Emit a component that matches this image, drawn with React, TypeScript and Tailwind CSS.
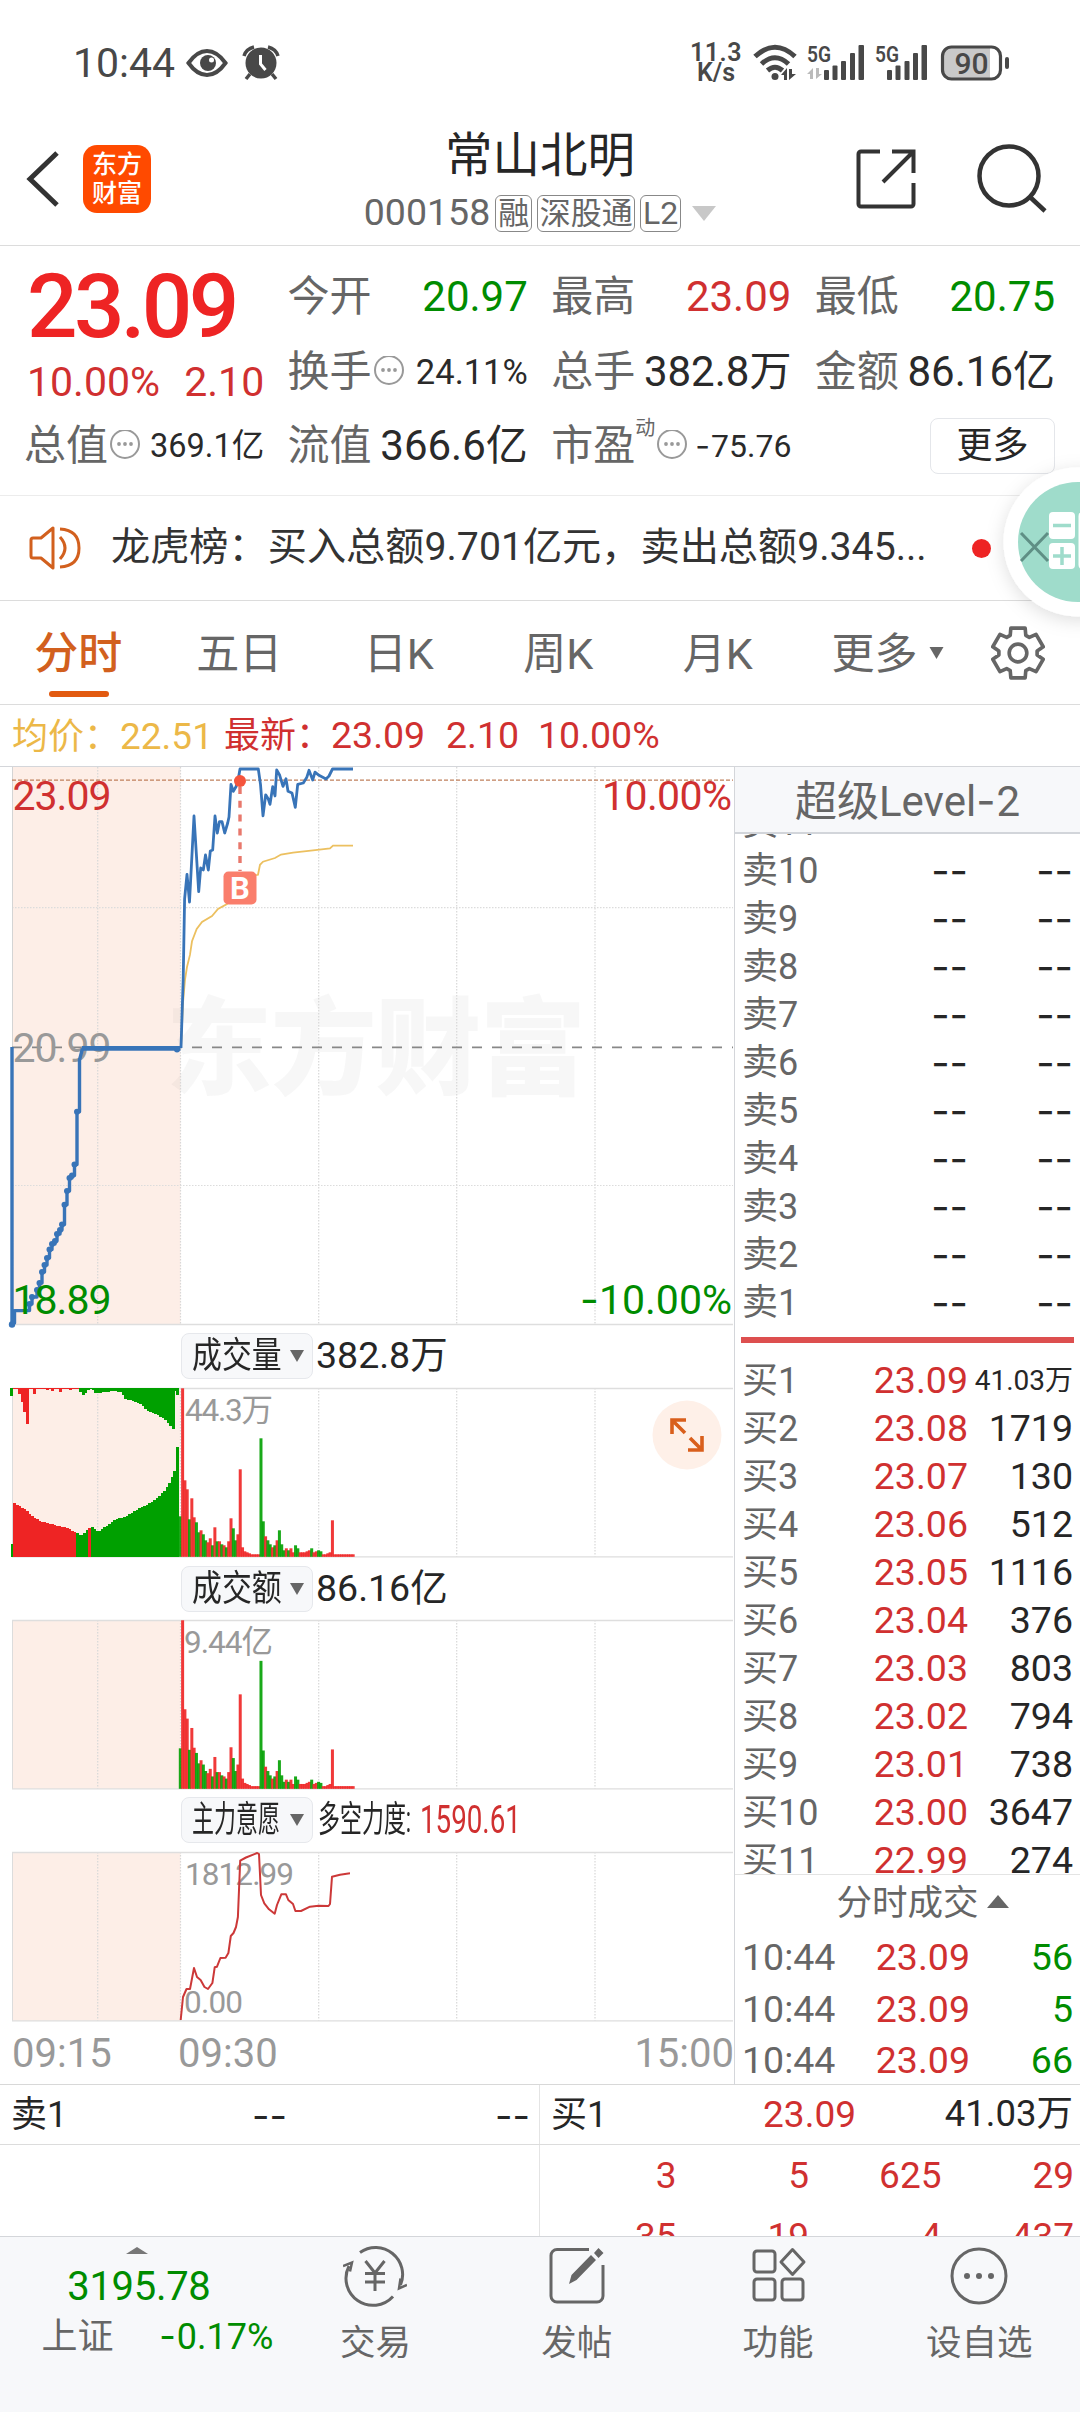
import type { ReactNode } from "react";
import clsx from "clsx";

const RED = "#d03030";
const GREEN = "#008c00";
const UP = "#ee2424";
const DOWN = "#00a000";

const TABS = ["分时", "五日", "日K", "周K", "月K"];

const ASKS = [10, 9, 8, 7, 6, 5, 4, 3, 2, 1];

const BIDS = [
  ["23.09", "41.03万"],
  ["23.08", "1719"],
  ["23.07", "130"],
  ["23.06", "512"],
  ["23.05", "1116"],
  ["23.04", "376"],
  ["23.03", "803"],
  ["23.02", "794"],
  ["23.01", "738"],
  ["23.00", "3647"],
  ["22.99", "274"],
];

const TRADES = ["56", "5", "66"];

const QUEUE = [
  ["3", "5", "625", "29"],
  ["35", "19", "4", "437"],
];

// One bar per minute since the open, height in px; negative = falling minute.
const MINUTES = [
  -40, 168, 76, 67, -37, 58, 39, -34, -24, 26, -22, -16, 14, 18, -11, 29, -15, 15, -12, 11, -9, 15,
  38, -28, -16, 22, 87, 9, 5, 4, 3, 2, 2, 2, 2, -118, -35, 20, -16, -12, 9, -11, 16, -26, -12, -6,
  8, -6, 8, 4, -11, -8, 4, 4, 4, 5, 6, -8, 4, 5, -6, -5, 2, 2, 3, 4, 36, 2, 2, 2, 2, 2, 2, 2, 2, 2,
];

// Call auction envelope, [x, height].
const AUCTION_MATCHED = [
  [12, 54], [18, 51], [25, 46], [31, 40], [38, 36], [52, 32], [65, 29], [75, 24], [79, 21], [84, 25],
  [87, 29], [91, 30], [94, 26], [98, 26], [104, 30], [112, 36], [125, 41], [135, 47], [147, 53],
  [155, 58], [162, 65], [166, 70], [170, 78], [174, 89], [176, 96],
];

const AUCTION_GREEN_LEFT = [
  [78, 2], [80, 5], [82, 8], [84, 5], [87, 1], [92, 2], [94, 5], [105, 4], [112, 3], [120, 4],
  [124, 11], [128, 12], [135, 14], [140, 17], [148, 24], [155, 26], [163, 31], [168, 37], [173, 42],
];

const AUCTION_RED_LEFT = [
  [14, 1], [19, 6], [21.5, 14], [24, 24], [26.5, 36], [34, 6], [42, 1], [47, 2], [52, 3],
  [56, 1], [60, 4], [66, 1], [70, 2], [75, 1],
];

const AUCTION_STEPS = [
  [29.5, 537], [32, 530], [37, 523], [39.5, 516], [42, 505], [44.5, 498], [47, 491], [49.5, 482.5],
  [52, 477], [55, 474], [57, 467], [60, 463], [62, 457.5], [64.5, 437.7], [67, 424], [69.5, 411],
  [72, 408.6], [74.5, 397.5], [77, 344.7],
];

const PRICE_LINE =
  "181,281 183.2,212 184.6,132 187,107.4 189.5,135 194,49 198.7,124.6 200.7,101 203.3,103 205.5,88 208.3,103 210.3,84 212.7,83 215,49 217.3,66 219.5,54.6 222,54.6 224.7,66 227.7,56 229,50 231,17.4 233.3,24.3 236,19.7 238,13.6 240,2 258.3,2 260.5,17.4 263,48.8 265.7,27.8 268.3,32 270,37.3 272.7,19.7 275,29 276.7,2.9 279.7,8.3 283,19.4 286,11.7 288,24.3 292,26 295.3,40.4 297.7,17.4 303.3,16 306.7,10.6 309,3.3 312.7,13 315,5.2 319,8.3 326,12 329,9 332.5,2 353,2";

const AVERAGE_LINE =
  "181,281 183,235.6 185,212.6 187,200 190,187.7 192,174.3 196.7,162 202,155 212,149 218,142 227,137 235,125.4 242,110 258,107.8 260,97.8 263,94.7 275,91 281,87.5 293,85.6 313,83.3 330,81.4 333,78.7 353,78.7";

const FORCE_LINE =
  "180.7,168 183,145 186.5,137 190,137 194,116 197,125 200.6,128 204.5,135 208,137 212.4,131 214.7,115.3 217,114.7 220.4,106 225.6,105.7 228.4,101 230.8,84 233.5,81 236,75 237.9,65 240.2,8.7 246,5.5 257.2,1 259,2 261,43 264.3,51.3 269,57.3 274.7,61.7 277,53 281.3,42.3 286,42.3 288.3,48 293,52 295.4,59 301,59 310,54.7 318.5,53.7 328.5,54 330,52 332,24.7 340,22.7 350,21.3";

const GRID_X = [97.7, 180.5, 318.7, 456.7, 595];

function heightAt(points: number[][], x: number) {
  for (let i = 1; i < points.length; i++) {
    const [x0, h0] = points[i - 1];
    const [x1, h1] = points[i];
    if (x <= x1) return h0 + ((h1 - h0) * (x - x0)) / (x1 - x0);
  }
  return points[points.length - 1][1];
}

function range(from: number, to: number, step: number) {
  const out: number[] = [];
  for (let v = from; v < to; v += step) out.push(v);
  return out;
}

// Roboto's hyphen is too short for a sign, Inter's has the right length.
function Minus() {
  return <span className="mr-px font-[Inter]">-</span>;
}

function Frame({ height }: { height: number }) {
  return (
    <>
      <rect x="12" y="0" width="168.5" height={height} fill="#fdeee7" />
      {GRID_X.map((x) => (
        <line key={x} x1={x} x2={x} y1="0" y2={height} stroke="#d8d8d8" strokeWidth="1.2" strokeDasharray="1.5 1.5" />
      ))}
      <path d={`M12.5 0V${height}`} stroke="#dcdcdc" />
      <path d={`M12 .5H733M12 ${height}H733`} stroke="#dedede" strokeWidth="1.3" />
    </>
  );
}

function MinuteBars({ gain = false }: { gain?: boolean }) {
  return (
    <>
      {MINUTES.map((value, i) => {
        const scale = !gain || i < 2 ? 1 : i < 9 ? 1.04 : 1.08;
        const h = Math.abs(value) * scale + 0.5;
        return (
          <rect
            key={i}
            x={178.8 + i * 2.305}
            y={168.8 - h}
            width="3"
            height={h}
            fill={value < 0 ? DOWN : UP}
            fillOpacity="0.9"
          />
        );
      })}
    </>
  );
}

function PriceChart() {
  const steps = AUCTION_STEPS.map(([x, y]) => `H${x}V${y}`).join("");
  return (
    <svg viewBox="0 0 734 560" className="block h-[560px] w-[734px] overflow-visible">
      <rect x="12" y="0" width="168.5" height="558" fill="#fdeee7" />
      <text x="166" y="319" fontSize="106" fontWeight="900" textLength="420" fill="#777" fillOpacity="0.06">
        东方财富
      </text>
      {GRID_X.map((x) => (
        <line key={x} x1={x} x2={x} y1="0" y2="558" stroke="#d8d8d8" strokeWidth="1.2" strokeDasharray="1.5 1.5" />
      ))}
      <path d="M12 140.7H733M12 418.5H733" stroke="#dcdcdc" strokeWidth="1.2" strokeDasharray="1.5 1.5" />
      <path d="M12.5 0V558" stroke="#d4d4d4" />
      <path d="M12 557.5H733" stroke="#dedede" strokeWidth="1.5" />
      <path d="M12 13.2H733" stroke="#c0805c" strokeWidth="1.3" strokeDasharray="4 2" />
      <path d="M12 280.4H733" stroke="#888" strokeWidth="1.8" strokeDasharray="10 10" />

      <g fontSize="41">
        <text x="12.500" y="43" fill={RED} textLength="99">23.09</text>
        <text x="12.500" y="295" fill="#999" textLength="99">20.99</text>
        <text x="602" y="43" fill={RED} textLength="130">10.00%</text>
        <text x="580" y="546.5" fill={GREEN} textLength="152">
          <tspan fontFamily="Inter">-</tspan>10.00%
        </text>
      </g>

      <polyline points={AVERAGE_LINE} fill="none" stroke="#ecc060" strokeWidth="1.8" />
      <g fill="none" stroke="#3874b8" strokeLinejoin="round">
        <path d={`M12 280V557L14.5 556V543.6H28${steps}H79.5V293L82.5 281.5`} strokeWidth="3.4" />
        <path d="M82 281.4H180.5" strokeWidth="4.6" />
        <polyline points={PRICE_LINE} strokeWidth="2.8" />
      </g>
      <g fill="#3874b8">
        <circle cx="12" cy="557.5" r="3.2" />
        <circle cx="177" cy="282.5" r="3" />
        {AUCTION_STEPS.map(([x, y]) => (
          <circle key={x} cx={x} cy={y} r="3" />
        ))}
      </g>
      <text x="12.500" y="546.5" fontSize="41" fill={GREEN} textLength="99">18.89</text>

      {/* buy marker */}
      <path d="M240 20V104" stroke="#e8786c" strokeWidth="3.4" strokeDasharray="7 6.8" />
      <circle cx="240" cy="14" r="6" fill="#f5543c" />
      <rect x="223.5" y="104.5" width="33" height="33" rx="5" fill="#fa7e6c" />
      <text x="240" y="132" fontSize="31" fontWeight="700" textAnchor="middle" fill="#fff">
        B
      </text>
    </svg>
  );
}

function VolumeChart() {
  return (
    <svg viewBox="0 0 734 170" className="block h-[170px] w-[734px] overflow-visible">
      <Frame height={168.8} />
      <g shapeRendering="crispEdges">
        {range(13, 176, 2.5).map((x) => {
          const h = heightAt(AUCTION_MATCHED, x);
          const red = x < 75 || (x > 87.5 && x < 90.5);
          return <rect key={x} x={x} y={168.8 - h} width="3" height={h} fill={red ? UP : DOWN} />;
        })}
        <rect x="176" y="59" width="3" height="110" fill={DOWN} />
        <rect x="10.500" y="156" width="2.700" height="13" fill={DOWN} />
        {range(79, 173, 2.5).map((x) => (
          <rect key={x} x={x} y="0" width="3" height={heightAt(AUCTION_GREEN_LEFT, x)} fill={DOWN} />
        ))}
        <rect x="174" y="0" width="3" height="3" fill={DOWN} />
        <rect x="176" y="0" width="3" height="7" fill={DOWN} />
        <rect x="13" y="0" width="66" height="1.4" fill={UP} />
        {AUCTION_RED_LEFT.map(([x, h]) => (
          <rect key={x} x={x - 1} y="0" width="3" height={h} fill={UP} />
        ))}
        <rect x="10" y="0" width="3" height="8" fill={DOWN} />
      </g>
      <MinuteBars />
      <text x="185" y="32.5" fontSize="31.5" fill="#999" textLength="88">44.3万</text>
    </svg>
  );
}

function TurnoverChart() {
  return (
    <svg viewBox="0 0 734 170" className="block h-[170px] w-[734px] overflow-visible">
      <Frame height={168.8} />
      <MinuteBars gain />
      <text x="184" y="32.5" fontSize="31.5" fill="#999" textLength="89">9.44亿</text>
    </svg>
  );
}

function ForceChart() {
  return (
    <svg viewBox="0 0 734 170" className="block h-[170px] w-[734px] overflow-visible">
      <Frame height={168.8} />
      <g fontSize="31.5" fill="#999">
        <text x="185" y="33" textLength="109">1812.99</text>
        <text x="184" y="161" textLength="59">0.00</text>
      </g>
      <polyline points={FORCE_LINE} fill="none" stroke="#cc3838" strokeWidth="2" strokeLinejoin="round" />
    </svg>
  );
}

function IndicatorBar({ name, squeeze, children }: { name: string; squeeze: string; children: ReactNode }) {
  return (
    <div className="flex h-[46px] items-center pl-[181px] text-[#262626]">
      <div className="flex h-[46px] w-[132px] shrink-0 items-center rounded-lg border border-[#e6e8ec] bg-[#f7f8fa] pl-[10px]">
        <div className="w-[90px]">
          <span className={clsx("block w-max origin-left text-[36px] leading-none", squeeze)}>{name}</span>
        </div>
        <svg viewBox="0 0 14 12" className="ml-[8px] h-3 w-[14px] fill-[#666]">
          <path d="M0 0h14L7 12z" />
        </svg>
      </div>
      {children}
    </div>
  );
}

function InfoDots() {
  return (
    <svg viewBox="0 0 32 32" className="ml-px size-8 shrink-0">
      <circle cx="16" cy="14" r="14" fill="none" stroke="#999" strokeWidth="2" />
      <g fill="#999">
        <circle cx="10" cy="14" r="1.900" />
        <circle cx="16" cy="14" r="1.900" />
        <circle cx="22" cy="14" r="1.900" />
      </g>
    </svg>
  );
}

function Stat({ label, value, tone, small, info, sup }: {
  label: string;
  value: ReactNode;
  tone?: string;
  small?: string;
  info?: boolean;
  sup?: string;
}) {
  return (
    <div className="flex h-[74.5px] items-center leading-none whitespace-nowrap">
      <span className="-ml-[3px] text-[42px] text-[#666]">{label}</span>
      {sup && <span className="-mt-9 text-[20px] text-[#666]">{sup}</span>}
      {info && <InfoDots />}
      <span className={clsx("ml-auto", small ?? "text-[42px]", tone ?? "text-[#2a2a2a]")}>{value}</span>
    </div>
  );
}

function StatusBar() {
  return (
    <div className="flex h-28 items-center pt-[14px] text-[#484848]">
      <span className="ml-[73px] w-[112px] text-[41px] leading-none">10:44</span>
      <svg viewBox="0 0 44 30" className="h-[30px] w-11">
        <path d="M3.5 15Q12 3 22 3t18.500 12Q32 27 22 27T3.500 15z" fill="none" stroke="#484848" strokeWidth="4" />
        <circle cx="23" cy="15" r="8" fill="#484848" />
        <circle cx="26.500" cy="12" r="2.500" fill="#fff" />
      </svg>
      <svg viewBox="0 0 38 36" className="ml-[13px] h-9 w-[38px]" fill="none" stroke="#484848">
        <circle cx="19" cy="18" r="15.500" fill="#484848" stroke="none" />
        <path d="M2 11Q4 4 12 2M36 11Q34 4 26 2M8 29l-4 5M30 29l4 5" strokeWidth="3.500" />
        <path d="M18.500 10v9l5 6" stroke="#fff" strokeWidth="3" />
      </svg>
      <div className="ml-auto flex w-[56px] flex-col items-center text-[25px] leading-[20px] font-semibold">
        <span className="tracking-[0.500px]">11.3</span>
        <span>K/s</span>
      </div>
      <svg viewBox="0 0 48 38" className="ml-[7px] h-[38px] w-12" fill="none" stroke="#484848">
        <path d="M4 12.500Q24-6 44 12.500" strokeWidth="5" />
        <path d="M10.500 20Q24 7.500 37.500 20" strokeWidth="5" />
        <path d="M16.500 26.500Q24 20 31.500 26.500" strokeWidth="5" />
        <g fill="#484848" stroke="none">
          <circle cx="24" cy="32.500" r="3.500" />
          <path d="M30 31l6-7v12h-3v-5zM45 30l-7 6V25h3v5z" />
        </g>
      </svg>
      <svg viewBox="0 0 62 38" className="ml-[8px] h-[38px] w-[62px] overflow-visible" fill="#484848">
        <text x="0" y="17.500" fontSize="22" fontWeight="600" textLength="24" lengthAdjust="spacingAndGlyphs">5G</text>
        <path d="M0 30l6-6v11H3v-5zM15 30l-6 5V24h3v6z" fill="#bbb" />
        <rect x="17" y="26" width="5" height="10" rx="1" />
        <rect x="25.500" y="21.500" width="5" height="14.500" rx="1" />
        <rect x="34" y="17" width="5" height="19" rx="1" />
        <rect x="43" y="9" width="5" height="27" rx="1" />
        <rect x="51.500" y="1" width="5.500" height="35" rx="1" />
      </svg>
      <svg viewBox="0 0 62 38" className="ml-[6px] h-[38px] w-[62px] overflow-visible" fill="#484848">
        <text x="0" y="17.500" fontSize="22" fontWeight="600" textLength="24" lengthAdjust="spacingAndGlyphs">5G</text>
        <rect x="12" y="26" width="5" height="10" rx="1" />
        <rect x="20.500" y="21.500" width="5" height="14.500" rx="1" />
        <rect x="29.500" y="17" width="5" height="19" rx="1" />
        <rect x="38" y="9" width="5" height="27" rx="1" />
        <rect x="46.500" y="1" width="5.500" height="35" rx="1" />
      </svg>
      <svg viewBox="0 0 72 38" className="mr-[69px] ml-[2px] h-[38px] w-[72px]">
        <path d="M12 4h39v30H12a8 8 0 0 1-8-8V12a8 8 0 0 1 8-8z" fill="#c9c9c9" />
        <rect x="3.500" y="3" width="58" height="32" rx="9" fill="none" stroke="#484848" strokeWidth="3.200" />
        <rect x="66" y="13" width="4" height="12" rx="2" fill="#484848" />
        <text x="32.500" y="29.500" fontSize="30" fontWeight="500" textAnchor="middle" fill="#484848">90</text>
      </svg>
    </div>
  );
}

function Header() {
  return (
    <div className="flex h-[134px] items-center border-b border-[#dcdcdc]">
      <div className="flex w-[260px] items-center">
        <svg viewBox="0 0 34 56" className="ml-[26px] h-14 w-[34px]">
          <path d="M31 2L4 28l27 26" fill="none" stroke="#333" strokeWidth="5" />
        </svg>
        <div className="ml-[23px] flex size-[68px] flex-col items-center justify-center rounded-[14px] bg-[#ff4a00] text-[25px] leading-[29px] font-medium text-white">
          <span>东方</span>
          <span>财富</span>
        </div>
      </div>
      <div className="flex flex-1 flex-col items-center pt-[11px]">
        <h1 className="text-[47.500px] leading-[58px] text-[#262626]">常山北明</h1>
        <div className="flex h-[56px] items-center text-[#666]">
          <span className="mr-[5px] text-[37.500px] leading-none">000158</span>
          <span className="mr-[5px] flex h-[37px] w-[37px] items-center justify-center rounded-md border border-[#888] text-[31px] leading-none">融</span>
          <span className="mr-[5px] flex h-[37px] w-[98px] items-center justify-center rounded-md border border-[#888] text-[31px] leading-none">深股通</span>
          <span className="mr-[11px] flex h-[37px] w-[41px] items-center justify-center rounded-md border border-[#888] text-[32px] leading-none">L2</span>
          <svg viewBox="0 0 24 15" className="h-[15px] w-6 fill-[#c8c8c8]">
            <path d="M0 0h24L12 15z" />
          </svg>
        </div>
      </div>
      <div className="flex w-[260px] items-center pl-[36px]">
        <svg viewBox="0 0 60 60" className="size-[60px]" fill="none" stroke="#333" strokeWidth="4">
          <path d="M24 2.500H5a2.500 2.500 0 0 0-2.500 2.500v50A2.500 2.500 0 0 0 5 57.500h50a2.500 2.500 0 0 0 2.500-2.500V34M36 2.500h21.500V24M57 3L27 33" />
        </svg>
        <svg viewBox="0 0 70 70" className="ml-[61px] size-[70px]" fill="none" stroke="#333" strokeWidth="4.500">
          <circle cx="32" cy="32" r="29.500" />
          <path d="M53 53l15 14" />
        </svg>
      </div>
    </div>
  );
}

function Quote() {
  return (
    <div className="grid h-[250px] grid-cols-4 content-start gap-x-[26.4px] border-b border-[#ececec] pt-[14px] pr-[25px] pl-[27px]">
      <div className="row-span-2 h-[149px] leading-none">
        <div className="flex h-[92px] items-center text-[89px] font-medium tracking-[-3.700px] text-[#ee2424]">23.09</div>
        <div className="flex h-[57px] items-center justify-between pt-1 text-[41px] text-[#d03030]">
          <span>10.00%</span>
          <span>2.10</span>
        </div>
      </div>
      <Stat label="今开" value="20.97" tone="text-[#008c00]" />
      <Stat label="最高" value="23.09" tone="text-[#d03030]" />
      <Stat label="最低" value="20.75" tone="text-[#008c00]" />
      <Stat label="换手" value="24.11%" small="text-[34.500px]" info />
      <Stat label="总手" value="382.8万" />
      <Stat label="金额" value="86.16亿" />
      <Stat label="总值" value="369.1亿" small="text-[32.500px]" info />
      <Stat label="流值" value="366.6亿" />
      <Stat
        label="市盈"
        value={
          <>
            <Minus />
            75.76
          </>
        }
        small="text-[32px]"
        info
        sup="动"
      />
      <div className="flex h-[74.500px] items-center justify-end">
        <button className="h-[56px] w-[125px] rounded-lg border border-[#e4e6ea] text-[36px] leading-none text-[#262626]">
          更多
        </button>
      </div>
    </div>
  );
}

function News() {
  return (
    <div className="relative flex h-[105px] items-center border-b border-[#dcdcdc]">
      <svg viewBox="0 0 52 44" className="ml-[29px] h-11 w-[52px]" fill="none" stroke="#d2601e" strokeWidth="3">
        <path d="M24 2v40L12 32H4a2 2 0 0 1-2-2V14a2 2 0 0 1 2-2h8z" strokeLinejoin="round" />
        <path d="M31 11q10 11 0 22M31 3q19 1 19 19T31 41" />
      </svg>
      <p className="ml-[30px] w-[830px] text-[39.200px] leading-none whitespace-nowrap text-[#333]">
        龙虎榜：买入总额9.701亿元，卖出总额9.345...
      </p>
      <span className="ml-[31px] size-[19px] rounded-full bg-[#ee2424]" />

      {/* floating calculator, half off screen */}
      <svg viewBox="970 437 110 210" className="absolute top-[-59px] right-0 h-[210px] w-[110px]">
        <defs>
          <filter id="lift" x="-30%" y="-30%" width="160%" height="160%">
            <feDropShadow dx="0" dy="4" stdDeviation="9" floodColor="#000" floodOpacity="0.13" />
          </filter>
        </defs>
        <circle cx="1078" cy="542" r="74.500" fill="#fff" filter="url(#lift)" />
        <circle cx="1078" cy="542" r="60" fill="#9fdccb" />
        <path d="M1021 533l27 28M1048 533l-27 28" stroke="#5f8f85" strokeWidth="3" />
        <g fill="#fff">
          <rect x="1049" y="512" width="26" height="27" rx="4" />
          <rect x="1049" y="543" width="26" height="26" rx="4" />
          <rect x="1078.500" y="512" width="26" height="57" rx="4" />
        </g>
        <path d="M1053 525.500h18M1053 556h18M1062 547v18" stroke="#9fdccb" strokeWidth="3.500" />
      </svg>
    </div>
  );
}

function Gear() {
  const points = range(0, 6, 1).flatMap((k) =>
    [[-24, 18.5], [-16, 25], [16, 25], [24, 18.5]].map(([offset, r]) => {
      const a = ((k * 60 - 90 + offset) * Math.PI) / 180;
      return `${(26 + r * Math.cos(a)).toFixed(1)},${(26 + r * Math.sin(a)).toFixed(1)}`;
    }),
  );
  return (
    <svg viewBox="0 0 52 52" className="size-[54px]" fill="none" stroke="#666" strokeWidth="3.5" strokeLinejoin="round">
      <polygon points={points.join(" ")} />
      <circle cx="26" cy="26" r="8.500" />
    </svg>
  );
}

function Tabs() {
  return (
    <div className="flex h-[104px] items-center border-b border-[#dcdcdc] text-[43px] leading-none text-[#666]">
      {TABS.map((tab, i) => (
        <div
          key={tab}
          className={clsx(
            "relative flex h-full w-[159.500px] items-center justify-center pt-[3px]",
            i === 0 && "pr-[3px] text-[44px] font-medium text-[#d2601e]",
          )}
        >
          {tab}
          {i === 0 && <span className="absolute bottom-[7px] left-[49px] h-[6px] w-[60px] rounded-full bg-[#e25a10]" />}
        </div>
      ))}
      <span className="ml-[34px] pt-[3px]">更多</span>
      <svg viewBox="0 0 14 12" className="ml-[11px] h-3 w-[15px] fill-[#666]">
        <path d="M0 0h14L7 12z" />
      </svg>
      <div className="ml-[47px]">
        <Gear />
      </div>
    </div>
  );
}

function DepthRow({ label, price, volume, compact }: {
  label: string;
  price: string;
  volume: string;
  compact?: boolean;
}) {
  const empty = price === "--";
  return (
    <div className="flex h-12 shrink-0 items-center pt-px pr-[7px] pl-[7px] text-[37.500px] leading-none text-[#262626]">
      <span className="w-[100px] text-[36px] text-[#666]">{label}</span>
      <span className={clsx("w-[126px] text-right", empty ? "font-[Inter] text-[40px]" : "text-[#d03030]")}>{price}</span>
      <span
        className={clsx(
          "flex-1 text-right whitespace-nowrap",
          empty && "font-[Inter] text-[40px]",
          compact && "text-[28px]",
        )}
      >
        {volume}
      </span>
    </div>
  );
}

function Depth() {
  return (
    <div className="flex h-[1318px] w-[346px] flex-col border-l border-[#d4d6da]">
      <div className="flex h-[67px] shrink-0 items-center justify-center border-b-2 border-[#d2d5da] bg-[#f7f8fa] pt-[3px] text-[42px] leading-none text-[#666]">
        <span>
          超级Level
          <Minus />2
        </span>
      </div>
      <div className="flex h-[503px] shrink-0 flex-col justify-end overflow-hidden pb-[11px]">
        <DepthRow label="卖11" price="--" volume="--" />
        {ASKS.map((n) => (
          <DepthRow key={n} label={`卖${n}`} price="--" volume="--" />
        ))}
      </div>
      <div className="mx-[6px] h-[6px] shrink-0 bg-[#dd4f4f]" />
      <div className="h-[532px] shrink-0 overflow-hidden border-b border-[#e4e4e4] pt-[13px]">
        {BIDS.map(([price, volume], i) => (
          <DepthRow key={price} label={`买${i + 1}`} price={price} volume={volume} compact={i === 0} />
        ))}
      </div>
      <div className="flex h-[57px] items-center justify-center pt-px pl-[30px] text-[35.500px] leading-none text-[#666]">
        分时成交
        <svg viewBox="0 0 22 13" className="-mt-1 ml-2 h-[13px] w-[22px] fill-[#666]">
          <path d="M0 13h22L11 0z" />
        </svg>
      </div>
      {TRADES.map((volume, i) => (
        <div key={i} className="flex h-[51.500px] items-center px-[7px] pt-[2px] text-[37.500px] leading-none">
          <span className="w-[100px] text-[#666]">10:44</span>
          <span className="w-[128px] text-right text-[#d03030]">23.09</span>
          <span className="flex-1 text-right text-[#008c00]">{volume}</span>
        </div>
      ))}
    </div>
  );
}

function Charts() {
  return (
    <div className="relative w-[734px]">
      <PriceChart />
      <div className="h-[6px]" />
      <IndicatorBar name="成交量" squeeze="scale-x-[0.83]">
        <span className="ml-[3px] text-[37.500px] leading-none">382.8万</span>
      </IndicatorBar>
      <div className="h-[9px]" />
      <VolumeChart />
      <div className="h-[8px]" />
      <IndicatorBar name="成交额" squeeze="scale-x-[0.83]">
        <span className="ml-[3px] text-[37.500px] leading-none">86.16亿</span>
      </IndicatorBar>
      <div className="h-[8px]" />
      <TurnoverChart />
      <div className="h-[7px]" />
      <IndicatorBar name="主力意愿" squeeze="scale-x-[0.61]">
        <span className="ml-[5px] w-[102px]">
          <span className="block w-max origin-left scale-x-[0.61] text-[36px] leading-none">多空力度:</span>
        </span>
        <span className="block w-max origin-left scale-x-[0.73] text-[38px] leading-none text-[#d03030]">1590.61</span>
      </IndicatorBar>
      <div className="h-[9px]" />
      <ForceChart />
      <div className="flex h-[63px] items-center pt-px pl-[12px] text-[40px] leading-none text-[#999]">
        <span className="w-[166px]">09:15</span>
        <span>09:30</span>
        <span className="ml-auto">15:00</span>
      </div>

      <svg viewBox="0 0 70 70" className="absolute top-[633px] left-[652px] size-[70px]" fill="none" stroke="#d95f1c" strokeWidth="3.600">
        <circle cx="35" cy="35" r="34.500" fill="#fef0e8" stroke="none" />
        <path d="M34 20H20V34M20 20L33 33M50 36v14H36M50 50L38 38" />
      </svg>
    </div>
  );
}

function OrderQueue() {
  return (
    <div className="h-[152px] overflow-hidden border-t border-[#d8d8d8] text-[36px] leading-none text-[#262626]">
      <div className="flex h-[60px] border-b border-[#dcdcdc]">
        <div className="flex w-[540px] items-center border-r border-[#e4e4e4] pr-[9px] pl-[11px]">
          <span className="w-[150px]">卖1</span>
          <span className="w-[126px] text-right font-[Inter] text-[38px]">--</span>
          <span className="flex-1 text-right font-[Inter] text-[38px]">--</span>
        </div>
        <div className="flex w-[540px] items-center pr-[7px] pl-[11px]">
          <span className="w-[150px]">买1</span>
          <span className="w-[155px] text-right text-[37px] text-[#d03030]">23.09</span>
          <span className="flex-1 text-right text-[36.500px]">41.03万</span>
        </div>
      </div>
      <div className="flex h-[140px]">
        <div className="w-[540px] border-r border-[#e4e4e4]" />
        <div className="w-[540px] text-[37px] text-[#d03030]">
          {QUEUE.map((row) => (
            <div key={row[0]} className="flex h-[61px] items-center pl-[4px]">
              {row.map((n) => (
                <span key={n} className="w-[132.500px] text-right">{n}</span>
              ))}
            </div>
          ))}
        </div>
      </div>
    </div>
  );
}

function NavItem({ label, children }: { label: string; children: ReactNode }) {
  return (
    <div className="flex w-[201.500px] flex-col items-center pt-[7px]">
      <svg viewBox="0 0 64 64" className="size-16" fill="none" stroke="#666" strokeWidth="3">
        {children}
      </svg>
      <span className="mt-[18px] text-[35.500px] leading-none text-[#666]">{label}</span>
    </div>
  );
}

function BottomNav() {
  return (
    <div className="flex h-[176px] border-t border-[#d4d6da] bg-[#f7f8fa]">
      <div className="flex w-[275px] flex-col items-center leading-none text-[#008c00]">
        <svg viewBox="0 0 22 7" className="mt-[10px] h-[7px] w-[22px] fill-[#777]">
          <path d="M0 7h22L11 0z" />
        </svg>
        <span className="mt-[13px] ml-[3px] text-[40px] tracking-[-0.300px]">3195.78</span>
        <div className="mt-[11px] ml-10 flex w-[232px] items-center justify-between text-[36px]">
          <span className="text-[#666]">上证</span>
          <span>
            <Minus />
            0.17%
          </span>
        </div>
      </div>
      <NavItem label="交易">
        <path d="M17 8.500A27 27 0 0 1 57.500 41M50 52.500A27 27 0 0 1 6 22" />
        <path d="M0 22l9-3.500-2 9M64 41l-8 3.500 1.500-10" strokeWidth="2.500" />
        <path d="M22.500 17l9.500 12 9.500-12M32 29v18M22 29.500h20M22 38h20" />
      </NavItem>
      <NavItem label="发帖">
        <path d="M44 5.500H12a6 6 0 0 0-6 6V52a6 6 0 0 0 6 6h40a6 6 0 0 0 6-6V21" />
        <path d="M24 40l2.500-9L46 11l5 5-19.500 20zM49 9l4.500-5 5 5-5 5z" fill="#666" stroke="none" />
      </NavItem>
      <NavItem label="功能">
        <rect x="8" y="7" width="21" height="21" rx="3" />
        <rect x="8" y="35" width="21" height="21" rx="3" />
        <rect x="36" y="35" width="21" height="21" rx="3" />
        <path d="M46.500 5.500L58 18 46.500 30.500 35 18z" strokeLinejoin="round" />
      </NavItem>
      <NavItem label="设自选">
        <circle cx="32" cy="32" r="27" />
        <g fill="#666" stroke="none">
          <circle cx="20" cy="32" r="3" />
          <circle cx="32" cy="32" r="3" />
          <circle cx="44" cy="32" r="3" />
        </g>
      </NavItem>
    </div>
  );
}

export default function App() {
  return (
    <div className="h-[2412px] w-[1080px] overflow-hidden bg-white font-[family-name:Roboto,'Noto_Sans_CJK_SC',sans-serif]">
      <StatusBar />
      <Header />
      <Quote />
      <News />
      <Tabs />
      <div className="flex h-[62px] items-center border-b border-[#d4d6da] pt-px pl-[12px] text-[36px] leading-none whitespace-pre">
        <span className="w-[212px] text-[#ecb848]">
          均价：<span className="text-[37px]">22.51</span>
        </span>
        <span className="w-[107px] text-[#d03030]">最新：</span>
        <span className="w-[115px] text-[37.500px] text-[#d03030]">23.09</span>
        <span className="w-[92px] text-[37.500px] text-[#d03030]">2.10</span>
        <span className="text-[37.500px] text-[#d03030]">10.00%</span>
      </div>
      <div className="flex h-[1317px]">
        <Charts />
        <Depth />
      </div>
      <OrderQueue />
      <BottomNav />
    </div>
  );
}
